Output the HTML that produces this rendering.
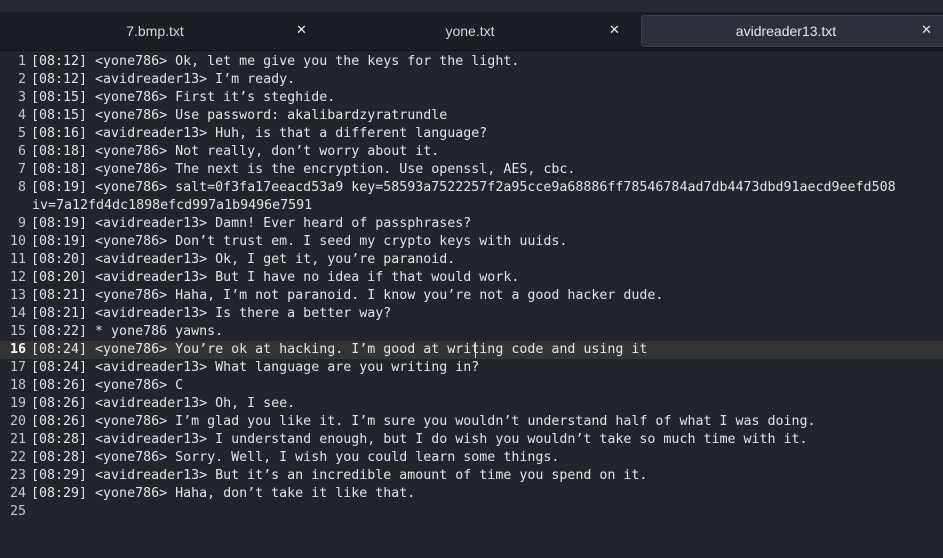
<!DOCTYPE html>
<html><head><style>
body{margin:0;width:943px;height:558px;background:#23252e;overflow:hidden;position:relative;font-family:"DejaVu Sans Mono",monospace}
.top{position:absolute;left:0;top:0;width:943px;height:12px;background:#262832}
.tabs{position:absolute;left:0;top:12px;width:943px;height:38px;background:#1c1e25;border-bottom:1px solid #121318}
.tab{position:absolute;top:0;height:38px;line-height:38px;text-align:center;color:#d8d8d8;font-family:"Liberation Sans",sans-serif;font-size:14px}
.x{position:absolute;top:0;font-family:"DejaVu Sans",sans-serif;font-weight:bold;color:#e8e8e8;font-size:13px;line-height:38px}
.act{position:absolute;left:641px;top:15px;width:310px;height:30px;background:#2d303b;border:1px solid #3a3d48;border-radius:3px;box-shadow:0 1px 0 #111}
.ed{position:absolute;left:0;top:53px;width:943px}
.l{position:relative;height:18px;line-height:18px;font-size:13.3px;color:#e4e4e4;white-space:pre}
.n{position:absolute;left:0;width:26px;text-align:right;color:#c8c8c8}
.t{position:absolute;left:31px}
.cur{background:#333436}
.cur .n{color:#fff;font-weight:bold}
.caret{position:absolute;left:475px;top:1px;width:1px;height:16px;background:#ddd}
</style></head><body>
<div class="top"></div>
<div class="tabs">
<div class="tab" style="left:0;width:310px">7.bmp.txt</div><div class="x" style="left:296px">✕</div>
<div class="tab" style="left:315px;width:310px">yone.txt</div><div class="x" style="left:609px">✕</div>
</div>
<div class="act"></div>
<div class="tab" style="left:641px;width:290px;top:12px;color:#e8e8e8">avidreader13.txt</div><div class="x" style="left:921px;top:12px">✕</div>
<div class="ed">
<div class="l"><span class="n">1</span><span class="t">[08:12] &lt;yone786&gt; Ok, let me give you the keys for the light.</span></div>
<div class="l"><span class="n">2</span><span class="t">[08:12] &lt;avidreader13&gt; I’m ready.</span></div>
<div class="l"><span class="n">3</span><span class="t">[08:15] &lt;yone786&gt; First it’s steghide.</span></div>
<div class="l"><span class="n">4</span><span class="t">[08:15] &lt;yone786&gt; Use password: akalibardzyratrundle</span></div>
<div class="l"><span class="n">5</span><span class="t">[08:16] &lt;avidreader13&gt; Huh, is that a different language?</span></div>
<div class="l"><span class="n">6</span><span class="t">[08:18] &lt;yone786&gt; Not really, don’t worry about it.</span></div>
<div class="l"><span class="n">7</span><span class="t">[08:18] &lt;yone786&gt; The next is the encryption. Use openssl, AES, cbc.</span></div>
<div class="l"><span class="n">8</span><span class="t">[08:19] &lt;yone786&gt; salt=0f3fa17eeacd53a9 key=58593a7522257f2a95cce9a68886ff78546784ad7db4473dbd91aecd9eefd508</span></div>
<div class="l"><span class="t" style="left:32px">iv=7a12fd4dc1898efcd997a1b9496e7591</span></div>
<div class="l"><span class="n">9</span><span class="t">[08:19] &lt;avidreader13&gt; Damn! Ever heard of passphrases?</span></div>
<div class="l"><span class="n">10</span><span class="t">[08:19] &lt;yone786&gt; Don’t trust em. I seed my crypto keys with uuids.</span></div>
<div class="l"><span class="n">11</span><span class="t">[08:20] &lt;avidreader13&gt; Ok, I get it, you’re paranoid.</span></div>
<div class="l"><span class="n">12</span><span class="t">[08:20] &lt;avidreader13&gt; But I have no idea if that would work.</span></div>
<div class="l"><span class="n">13</span><span class="t">[08:21] &lt;yone786&gt; Haha, I’m not paranoid. I know you’re not a good hacker dude.</span></div>
<div class="l"><span class="n">14</span><span class="t">[08:21] &lt;avidreader13&gt; Is there a better way?</span></div>
<div class="l"><span class="n">15</span><span class="t">[08:22] * yone786 yawns.</span></div>
<div class="l cur"><span class="n">16</span><span class="t">[08:24] &lt;yone786&gt; You’re ok at hacking. I’m good at writing code and using it</span><span class="caret"></span></div>
<div class="l"><span class="n">17</span><span class="t">[08:24] &lt;avidreader13&gt; What language are you writing in?</span></div>
<div class="l"><span class="n">18</span><span class="t">[08:26] &lt;yone786&gt; C</span></div>
<div class="l"><span class="n">19</span><span class="t">[08:26] &lt;avidreader13&gt; Oh, I see.</span></div>
<div class="l"><span class="n">20</span><span class="t">[08:26] &lt;yone786&gt; I’m glad you like it. I’m sure you wouldn’t understand half of what I was doing.</span></div>
<div class="l"><span class="n">21</span><span class="t">[08:28] &lt;avidreader13&gt; I understand enough, but I do wish you wouldn’t take so much time with it.</span></div>
<div class="l"><span class="n">22</span><span class="t">[08:28] &lt;yone786&gt; Sorry. Well, I wish you could learn some things.</span></div>
<div class="l"><span class="n">23</span><span class="t">[08:29] &lt;avidreader13&gt; But it’s an incredible amount of time you spend on it.</span></div>
<div class="l"><span class="n">24</span><span class="t">[08:29] &lt;yone786&gt; Haha, don’t take it like that.</span></div>
<div class="l"><span class="n">25</span></div>
</div>
</body></html>
